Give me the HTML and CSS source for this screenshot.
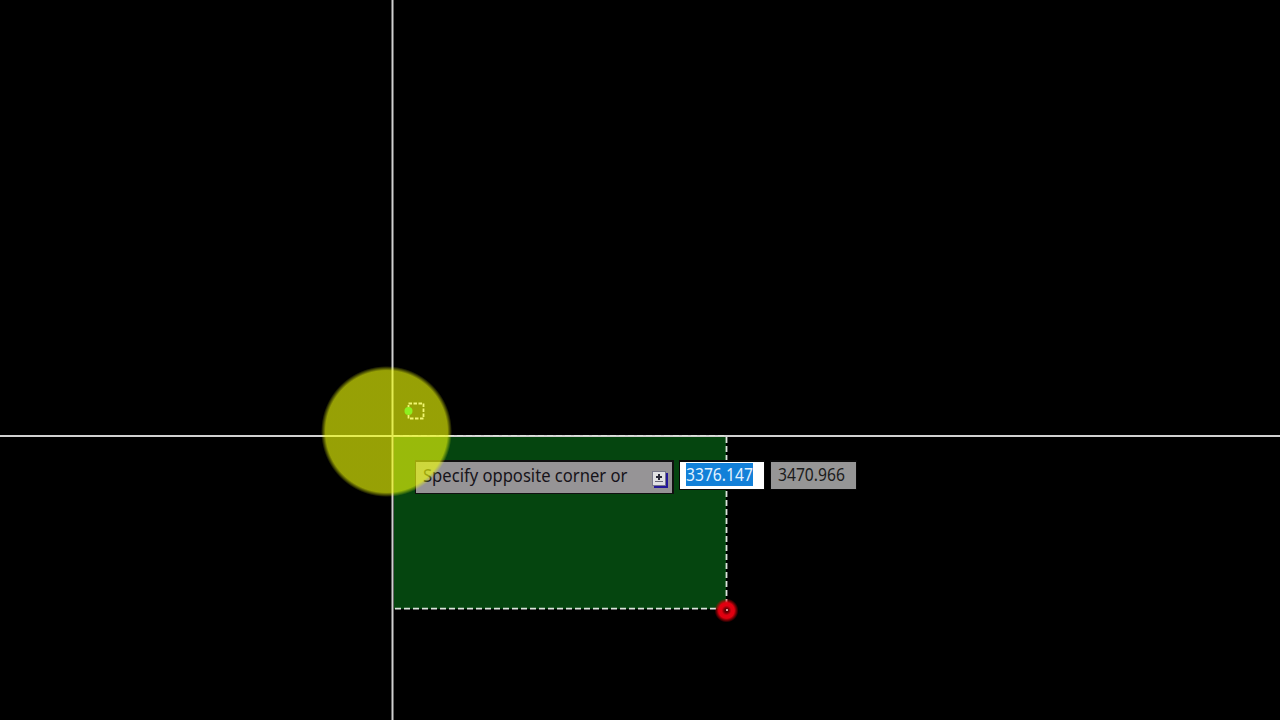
FILE: index.html
```html
<!DOCTYPE html>
<html lang="en">

<head>
    <meta charset="UTF-8">
    <meta name="viewport" content="width=device-width, initial-scale=1.0">
    <title>Drawing Canvas</title>
    <link rel="stylesheet" href="styles.css">
</head>

<body>
    <div class="canvas">
        <svg class="drawing" width="1280" height="720" viewBox="0 0 1280 720">
            <!-- selection window -->
            <rect class="selection" x="394" y="436" width="332" height="173" />
            <path class="crosshair" d="M392.5 0V720M0 436H1280" />
            <path class="dash" d="M395 608.7H726" />
            <path class="dash" d="M726.5 437V608" />
            <path class="dash dash-top" d="M394 435.5H726" />
        </svg>

        <div class="dynamic-input">
            <div class="prompt">
                <span class="prompt-text">Specify opposite corner or</span>
                <svg class="options" width="16" height="17" viewBox="0 0 16 17">
                    <path fill="#24189a" d="M2 2h14v15H2z" />
                    <path fill="#77778a" d="M0 0h14v15H0z" />
                    <path fill="#e1e1e4" d="M1 1h12v13H1z" />
                    <path fill="#292938" d="M6 3h2v2h2v2H8v2H6V7H4V5h2z" />
                    <path fill="#696978" d="M3 10h8v1H3z" />
                </svg>
            </div>
            <div class="field active"><span class="value">3376.147</span></div>
            <div class="field"><span class="value">3470.966</span></div>
        </div>

        <!-- cursor highlight and pick marker -->
        <svg class="overlay" width="1280" height="720" viewBox="0 0 1280 720">
            <defs>
                <radialGradient id="halo">
                    <stop offset="0.93" stop-color="#f0ff08" stop-opacity="0.63" />
                    <stop offset="1" stop-color="#f0ff08" stop-opacity="0" />
                </radialGradient>
                <radialGradient id="pick">
                    <stop offset="0" stop-color="#400000" />
                    <stop offset="0.18" stop-color="#700004" />
                    <stop offset="0.4" stop-color="#e00010" />
                    <stop offset="0.65" stop-color="#e00010" />
                    <stop offset="1" stop-color="#d00000" stop-opacity="0" />
                </radialGradient>
            </defs>
            <circle cx="386.5" cy="431.5" r="65.5" fill="url(#halo)" />
            <rect class="badge" x="408.5" y="403.5" width="15" height="15" />
            <circle cx="408.5" cy="411" r="4" fill="#8df020" />
            <circle cx="726.5" cy="610.5" r="12" fill="url(#pick)" />
            <path d="M726 609h2v2h-2z" fill="#d8a0a0" />
        </svg>
    </div>
</body>

</html>
```
FILE: styles.css
```css
body {
    background: black;
    margin: 0;
    padding: 0;
    overflow: hidden;
}

.canvas {
    position: relative;
    width: 1280px;
    height: 720px;
    overflow: hidden;
    font-family: "Noto Sans", sans-serif;
    font-size: 18px;
}

.drawing,
.overlay {
    display: block;
    position: absolute;
    top: 0;
    left: 0;
}

.selection {
    fill: #05450f;
}

.crosshair {
    stroke: #d0d0d0;
    stroke-width: 2;
    fill: none;
}

.dash {
    stroke: #dce4dc;
    stroke-width: 1.8;
    stroke-dasharray: 6 3;
    fill: none;
}

.dash-top {
    stroke-width: 1;
}

.dynamic-input {
    position: absolute;
    left: 415px;
    top: 460px;
    display: flex;
    align-items: flex-start;
    gap: 5px;
}

.prompt {
    box-sizing: border-box;
    display: flex;
    align-items: center;
    justify-content: space-between;
    width: 259px;
    height: 34px;
    padding: 0 4px 0 7px;
    background: #969496;
    border: 1px solid #101010;
    border-width: 2px 2px 1px 1px;
    color: #17131a;
    white-space: nowrap;
}

.prompt-text {
    width: 205px;
    line-height: 24px;
    margin-bottom: 5px;
    transform: scaleX(0.922);
    transform-origin: left;
}

.options {
    margin-top: 3px;
}

.field {
    box-sizing: border-box;
    width: 86px;
    height: 30px;
    padding: 1px 6px;
    background: #969696;
    border: 1px solid #080808;
    border-top-width: 2px;
    color: #1c1c1c;
}

.field:last-child {
    width: 87px;
    padding-left: 7px;
}

.value {
    display: block;
    width: max-content;
    height: 23px;
    line-height: 23px;
    transform: scaleX(0.87);
    transform-origin: left;
}

.active {
    background: white;
    color: #e2f2ff;
}

.active .value {
    background: #1280d8;
}

.badge {
    fill: none;
    stroke: #f0f570;
    stroke-width: 1.8;
    stroke-dasharray: 3.5 1.5;
}
```
